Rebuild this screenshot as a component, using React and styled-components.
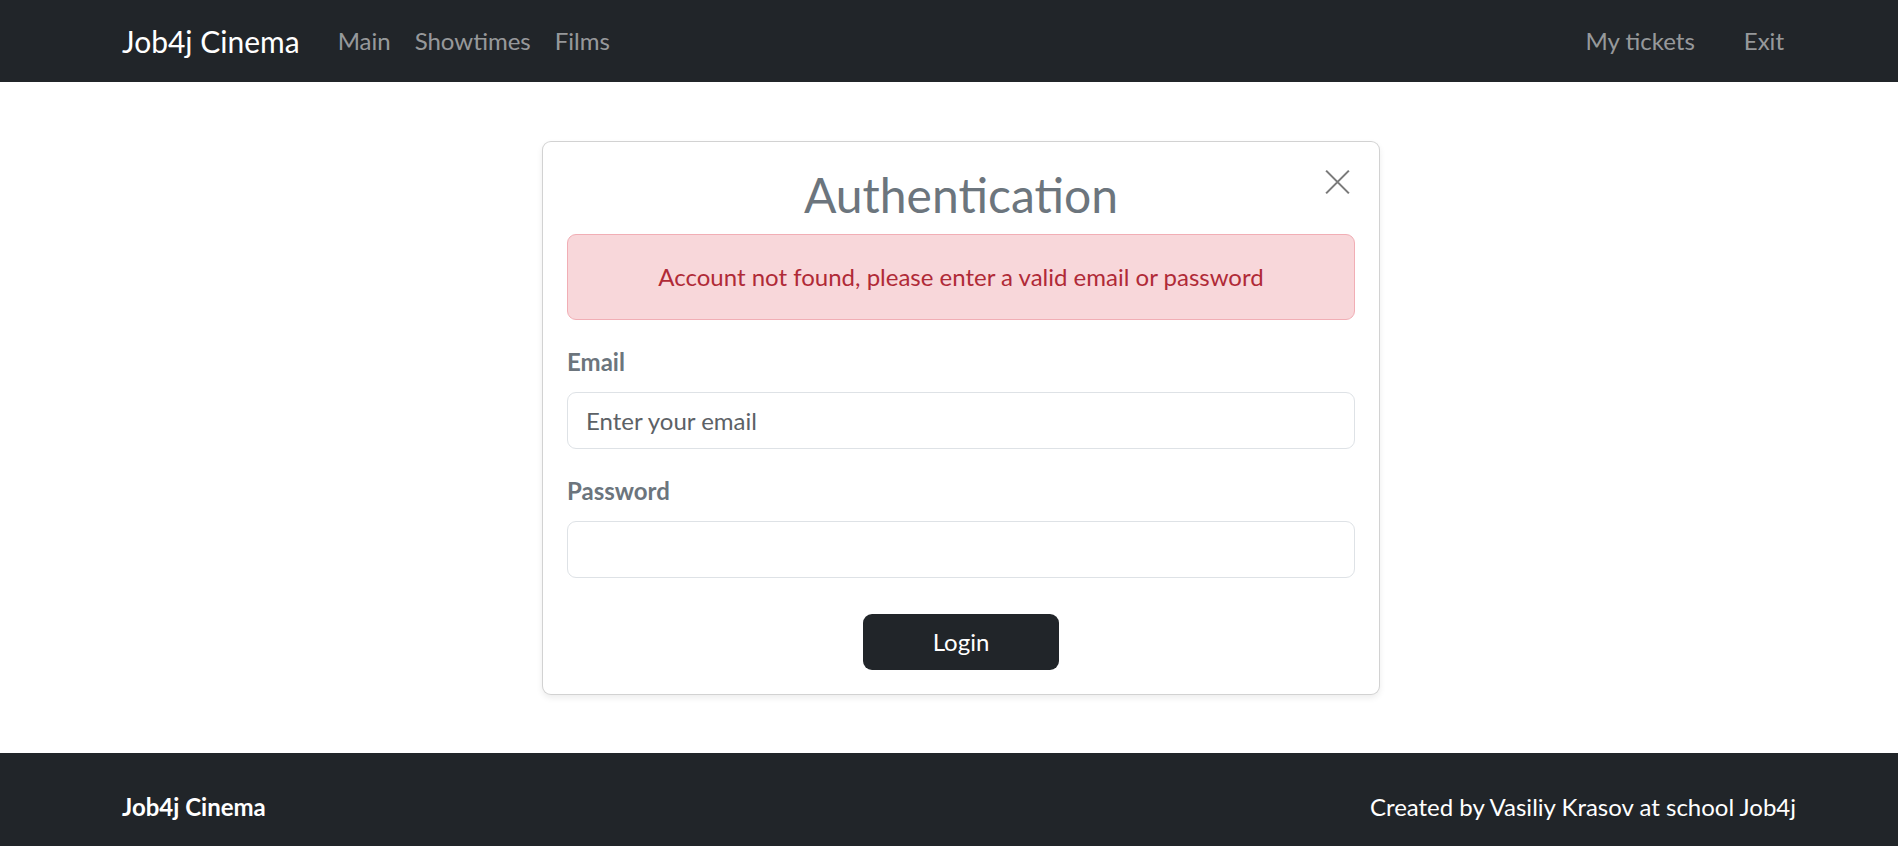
import React from "react";
import styled, { createGlobalStyle } from "styled-components";

const GlobalStyle = createGlobalStyle`
  html, body { margin: 0; padding: 0; }
  body {
    font-family: Lato, "Liberation Sans", sans-serif;
    background: #ffffff;
    color: #212529;
  }
  * { box-sizing: border-box; }
`;

const Page = styled.div`
  display: flex;
  flex-direction: column;
`;

const NavBar = styled.nav`
  height: 82px;
  background: #212529;
  display: flex;
  align-items: center;
  padding: 0 102px 0 122px;
`;

const Brand = styled.a`
  font-size: 30px;
  line-height: 45px;
  color: #ffffff;
  text-decoration: none;
  margin-right: 26px;
`;

const NavGroup = styled.div`
  display: flex;
  align-items: center;
  gap: ${(p) => p.$gap || 0}px;
  margin-left: ${(p) => (p.$right ? "auto" : "0")};
`;

const NavLink = styled.a`
  font-size: 24px;
  line-height: 36px;
  padding: 0 12px;
  color: rgba(255, 255, 255, 0.55);
  text-decoration: none;
`;

const Main = styled.main`
  display: flex;
  justify-content: center;
  padding: 59px 0 58px 24px;
`;

const Card = styled.div`
  width: 838px;
  border: 1px solid rgba(0, 0, 0, 0.175);
  border-radius: 9px;
  padding: 24px;
  background: #fff;
  box-shadow: 0 3px 6px rgba(0, 0, 0, 0.075);
  display: flex;
  flex-direction: column;
`;

const Header = styled.div`
  display: grid;
  grid-template-columns: 36px 1fr 36px;
  align-items: start;
  margin-bottom: 10px;
`;

const Title = styled.h2`
  grid-column: 2;
  margin: 0;
  font-size: 48px;
  line-height: 57.6px;
  font-weight: 400;
  color: #6c757d;
  text-align: center;
`;

const CloseButton = styled.button`
  grid-column: 3;
  width: 36px;
  height: 36px;
  padding: 4px;
  margin-top: -2px;
  border: none;
  background: transparent;
  cursor: pointer;
  display: flex;
  align-items: center;
  justify-content: center;
  svg { display: block; }
`;

const Alert = styled.div`
  border: 1px solid #f1aeb5;
  background: #f8d7da;
  border-radius: 9px;
  padding: 24px;
  font-size: 24px;
  line-height: 36px;
  color: #b02a37;
  text-align: center;
  margin-bottom: 24px;
`;

const Field = styled.div`
  display: flex;
  flex-direction: column;
  margin-bottom: 24px;
`;

const Label = styled.label`
  font-size: 24px;
  line-height: 36px;
  font-weight: 700;
  color: #6c757d;
  margin-bottom: 12px;
`;

const Input = styled.input`
  height: 57px;
  border: 1px solid #dee2e6;
  border-radius: 9px;
  padding: 0 18px;
  font-family: inherit;
  font-size: 24px;
  color: #212529;
  background: #fff;
  outline: none;
  &::placeholder { color: #5c6166; }
`;

const Actions = styled.div`
  display: flex;
  justify-content: center;
  margin-top: 12px;
`;

const Button = styled.button`
  width: 196px;
  height: 56px;
  border: none;
  border-radius: 9px;
  background: #212529;
  color: #fff;
  font-family: inherit;
  font-size: 24px;
  cursor: pointer;
`;

const Footer = styled.footer`
  background: #212529;
  padding: 36px 102px 36px 122px;
  display: flex;
  justify-content: space-between;
  align-items: center;
  color: #fff;
  font-size: 24px;
  line-height: 36px;
`;

const FooterBrand = styled.span`
  font-weight: 700;
`;

export default function App() {
  return (
    <Page>
      <GlobalStyle />
      <NavBar>
        <Brand href="#">Job4j Cinema</Brand>
        <NavGroup>
          <NavLink href="#">Main</NavLink>
          <NavLink href="#">Showtimes</NavLink>
          <NavLink href="#">Films</NavLink>
        </NavGroup>
        <NavGroup $right $gap={25}>
          <NavLink href="#">My tickets</NavLink>
          <NavLink href="#">Exit</NavLink>
        </NavGroup>
      </NavBar>
      <Main>
        <Card>
          <Header>
            <Title>Authentication</Title>
            <CloseButton aria-label="Close">
              <svg width="27" height="26" viewBox="0 0 16 16">
                <path d="M1 1 L15 15 M15 1 L1 15" stroke="#7a7a7a" strokeWidth="1.3" fill="none" />
              </svg>
            </CloseButton>
          </Header>
          <Alert>Account not found, please enter a valid email or password</Alert>
          <Field>
            <Label>Email</Label>
            <Input type="email" placeholder="Enter your email" />
          </Field>
          <Field>
            <Label>Password</Label>
            <Input type="password" />
          </Field>
          <Actions>
            <Button>Login</Button>
          </Actions>
        </Card>
      </Main>
      <Footer>
        <FooterBrand>Job4j Cinema</FooterBrand>
        <span>Created by Vasiliy Krasov at school Job4j</span>
      </Footer>
    </Page>
  );
}
